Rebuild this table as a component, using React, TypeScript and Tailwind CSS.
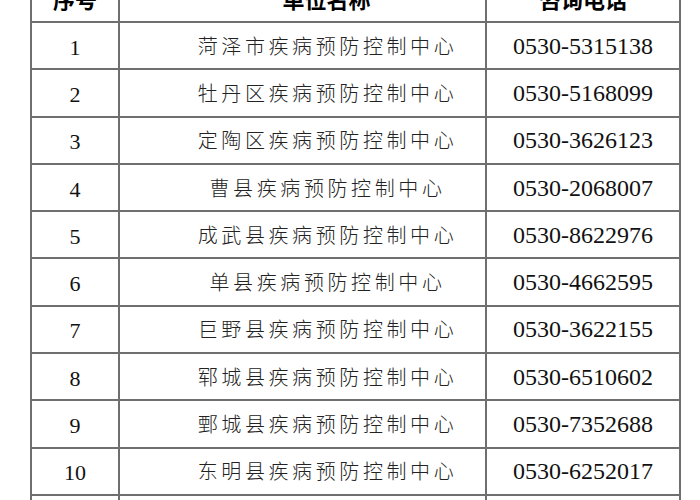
const rows = [
  ["1", "菏泽市疾病预防控制中心", "0530-5315138"],
  ["2", "牡丹区疾病预防控制中心", "0530-5168099"],
  ["3", "定陶区疾病预防控制中心", "0530-3626123"],
  ["4", "曹县疾病预防控制中心", "0530-2068007"],
  ["5", "成武县疾病预防控制中心", "0530-8622976"],
  ["6", "单县疾病预防控制中心", "0530-4662595"],
  ["7", "巨野县疾病预防控制中心", "0530-3622155"],
  ["8", "郓城县疾病预防控制中心", "0530-6510602"],
  ["9", "鄄城县疾病预防控制中心", "0530-7352688"],
  ["10", "东明县疾病预防控制中心", "0530-6252017"],
  ["11", "", ""],
];

const serif = "font-['Liberation_Serif','Noto_Sans_CJK_SC',serif]";
const cjk = "font-['Noto_Sans_CJK_SC',sans-serif]";

export default function App() {
  return (
    <div className="h-[500px] w-[700px] overflow-hidden bg-white">
      <table className="-mt-[26px] ml-[30px] w-[649px] table-fixed border-collapse">
        <colgroup>
          <col className="w-[88px]" />
          <col className="w-[367px]" />
          <col className="w-[194px]" />
        </colgroup>
        <thead>
          <tr className={`h-[47px] text-[22px] font-bold text-black ${cjk}`}>
            <th className="border-2 border-[#6f6f6f] text-center">序号</th>
            <th className="border-2 border-[#6f6f6f] pl-[48px] text-center">单位名称</th>
            <th className="border-2 border-[#6f6f6f] text-center">咨询电话</th>
          </tr>
        </thead>
        <tbody>
          {rows.map(([n, name, tel]) => (
            <tr key={n} className="h-[47.3px]">
              <td className={`border-2 border-[#6f6f6f] pt-[3px] text-center text-[22px] text-[#111] ${serif}`}>{n}</td>
              <td className={`border-2 border-[#6f6f6f] pl-[50px] text-center text-[20px] font-light tracking-[3.6px] text-[#222] ${cjk}`}>
                {name}
              </td>
              <td className={`border-2 border-[#6f6f6f] text-center text-[24px] text-[#111] ${serif}`}>{tel}</td>
            </tr>
          ))}
        </tbody>
      </table>
    </div>
  );
}
